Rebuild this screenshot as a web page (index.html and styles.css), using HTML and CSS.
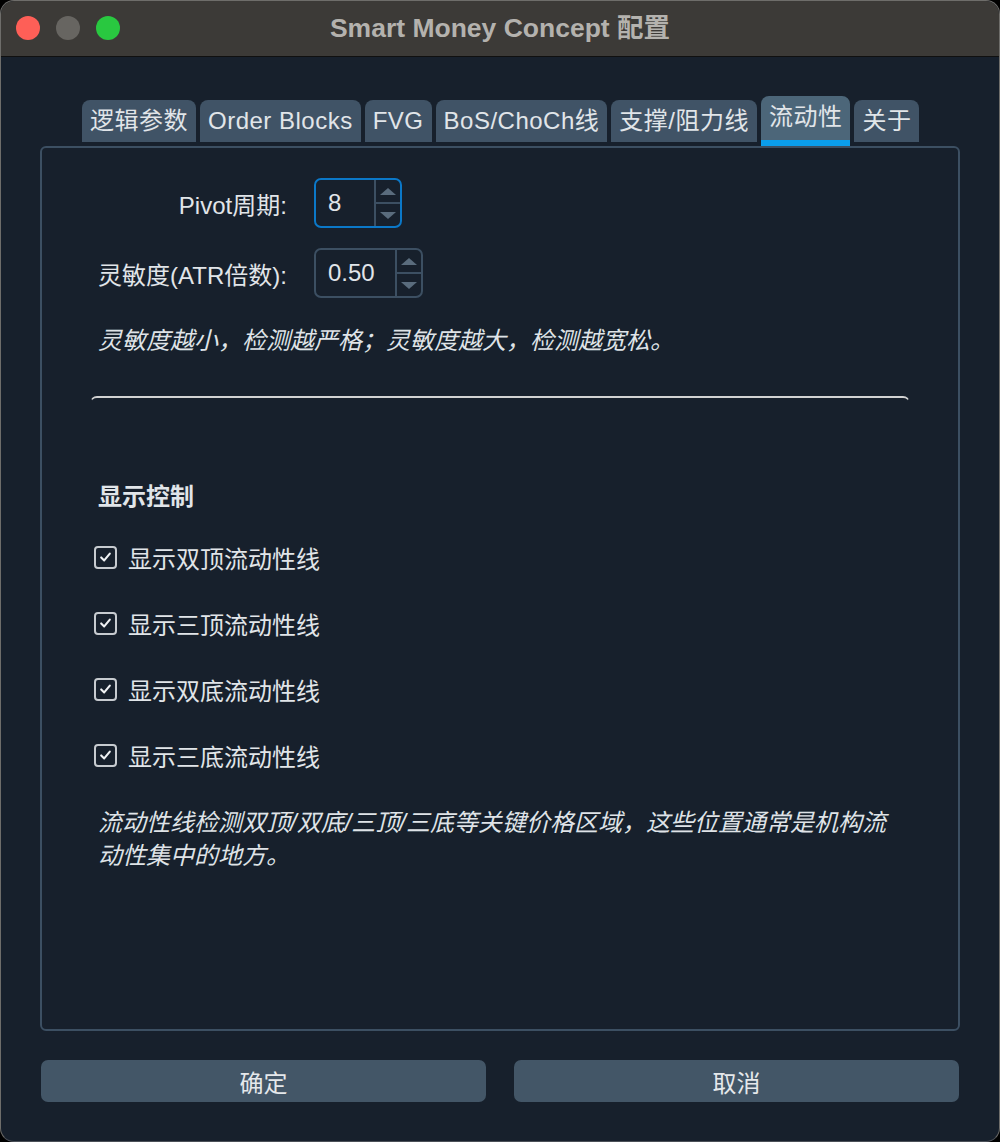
FILE: index.html
```html
<!DOCTYPE html>
<html lang="zh-CN">
<head>
    <meta charset="UTF-8">
    <meta name="viewport" content="width=device-width, initial-scale=1.0">
    <title>Smart Money Concept 配置</title>
    <link rel="stylesheet" href="styles.css">
</head>
<body>
    <div class="window">
        <div class="titlebar">
            <div class="lights">
                <span class="light red"></span>
                <span class="light gray"></span>
                <span class="light green"></span>
            </div>
            <div class="title">Smart Money Concept 配置</div>
        </div>

        <div class="content">
            <div class="tabs">
                <div class="tab">逻辑参数</div>
                <div class="tab">Order Blocks</div>
                <div class="tab">FVG</div>
                <div class="tab">BoS/ChoCh线</div>
                <div class="tab">支撑/阻力线</div>
                <div class="tab active">流动性</div>
                <div class="tab">关于</div>
            </div>

            <div class="panel">
                <div class="form">
                    <label class="formLabel">Pivot周期:</label>
                    <div class="spin focus narrow">
                        <span class="spinValue">8</span>
                        <span class="spinBtns">
                            <span class="spinBtn"><i class="arrowUp"></i></span>
                            <span class="spinBtn"><i class="arrowDown"></i></span>
                        </span>
                    </div>
                    <label class="formLabel">灵敏度(ATR倍数):</label>
                    <div class="spin wide">
                        <span class="spinValue">0.50</span>
                        <span class="spinBtns">
                            <span class="spinBtn"><i class="arrowUp"></i></span>
                            <span class="spinBtn"><i class="arrowDown"></i></span>
                        </span>
                    </div>
                </div>

                <p class="note first">灵敏度越小，检测越严格；灵敏度越大，检测越宽松。</p>

                <div class="separator"></div>

                <div class="groupTitle">显示控制</div>

                <div class="checkRow">
                    <span class="checkBox"><svg viewBox="0 0 22 22" width="22" height="22"><polyline points="6,11.5 9.5,15 16,7" /></svg></span>
                    <span>显示双顶流动性线</span>
                </div>
                <div class="checkRow">
                    <span class="checkBox"><svg viewBox="0 0 22 22" width="22" height="22"><polyline points="6,11.5 9.5,15 16,7" /></svg></span>
                    <span>显示三顶流动性线</span>
                </div>
                <div class="checkRow">
                    <span class="checkBox"><svg viewBox="0 0 22 22" width="22" height="22"><polyline points="6,11.5 9.5,15 16,7" /></svg></span>
                    <span>显示双底流动性线</span>
                </div>
                <div class="checkRow">
                    <span class="checkBox"><svg viewBox="0 0 22 22" width="22" height="22"><polyline points="6,11.5 9.5,15 16,7" /></svg></span>
                    <span>显示三底流动性线</span>
                </div>

                <p class="note last">流动性线检测双顶/双底/三顶/三底等关键价格区域，这些位置通常是机构流动性集中的地方。</p>
            </div>

            <div class="buttons">
                <button class="btn">确定</button>
                <button class="btn">取消</button>
            </div>
        </div>
    </div>
</body>
</html>
```

FILE: styles.css
```css
* {
    box-sizing: border-box;
}

body {
    margin: 0;
    background: #000;
    font-family: "Liberation Sans", "Noto Sans CJK SC", sans-serif;
    color: #e1e5e9;
}

.window {
    width: 1000px;
    height: 1142px;
    border: 1px solid #6e6d6a;
    border-bottom-color: #4b5058;
    border-radius: 14px;
    background: #17202c;
    overflow: hidden;
    display: flex;
    flex-direction: column;
}

.titlebar {
    height: 56px;
    flex: none;
    background: #3c3a37;
    border-bottom: 1px solid #101010;
    position: relative;
    display: flex;
    align-items: center;
    justify-content: center;
}

.lights {
    position: absolute;
    left: 15px;
    top: 15px;
    display: flex;
    gap: 16px;
}

.light {
    width: 24px;
    height: 24px;
    border-radius: 50%;
}

.red {
    background: #fe5f57;
}

.gray {
    background: #676561;
}

.green {
    background: #29c840;
}

.title {
    font-size: 26.5px;
    font-weight: bold;
    color: #b4b2ae;
    margin-top: -6px;
}

.content {
    flex: 1;
    padding: 39px 39px 0 39px;
    display: flex;
    flex-direction: column;
}

.tabs {
    display: flex;
    align-items: flex-end;
    gap: 4px;
    margin-left: 42px;
    height: 50px;
    position: relative;
    z-index: 1;
}

.tab {
    height: 42px;
    margin-bottom: 4px;
    padding: 0 8px;
    background: #405366;
    border-radius: 8px 8px 0 0;
    font-size: 24px;
    line-height: 42px;
    letter-spacing: 0.5px;
    color: #e1e5e9;
    white-space: nowrap;
}

.tab.active {
    height: 50px;
    margin-bottom: 0;
    background: #4c6679;
    border-bottom: 6px solid #0a9deb;
    line-height: 42px;
}

.panel {
    height: 885px;
    flex: none;
    border: 2px solid #3c4f62;
    border-radius: 6px;
    padding: 30px 48px 0 56px;
}

.form {
    display: grid;
    grid-template-columns: auto auto;
    grid-auto-rows: 50px;
    row-gap: 20px;
    column-gap: 27px;
    justify-content: start;
    align-items: center;
}

.formLabel {
    font-size: 24px;
    text-align: right;
}

.spin {
    height: 50px;
    border: 2px solid #3c4f62;
    border-radius: 7px;
    display: flex;
    font-size: 24px;
}

.spin.focus {
    border-color: #0b78c8;
}

.spin.narrow {
    width: 88px;
}

.spin.wide {
    width: 109px;
}

.spinValue {
    flex: 1;
    padding-left: 12px;
    line-height: 46px;
}

.spinBtns {
    width: 26px;
    border-left: 2px solid #3c4f62;
    display: flex;
    flex-direction: column;
}

.spinBtn {
    flex: 1;
    display: flex;
    align-items: center;
    justify-content: center;
}

.spinBtn + .spinBtn {
    border-top: 2px solid #3c4f62;
}

.arrowUp,
.arrowDown {
    width: 0;
    height: 0;
    border-left: 8px solid transparent;
    border-right: 8px solid transparent;
}

.arrowUp {
    border-bottom: 7px solid #5a6c7d;
}

.arrowDown {
    border-top: 7px solid #5a6c7d;
}

.note {
    margin: 0;
    font-size: 24px;
    line-height: 33px;
    font-style: italic;
    color: #dfe3e7;
}

.note.first {
    margin-top: 26px;
}

.note.last {
    margin-top: 18px;
    width: 806px;
}

.separator {
    margin: 39px 0 0 -8px;
    width: 820px;
    height: 10px;
    border-top: 2px solid #d2d2d2;
    border-left: 1px solid transparent;
    border-right: 1px solid transparent;
    border-radius: 7px 7px 0 0;
}

.groupTitle {
    margin-top: 74px;
    font-size: 24px;
    font-weight: bold;
    line-height: 33px;
}

.checkRow {
    height: 66px;
    display: flex;
    align-items: center;
    gap: 11px;
    margin-left: -4px;
    font-size: 24px;
}

.groupTitle + .checkRow {
    margin-top: 11px;
}

.checkBox {
    width: 23px;
    height: 23px;
    border: 2px solid #c7cbd0;
    border-radius: 4px;
    display: flex;
    align-items: center;
    justify-content: center;
}

.checkBox svg {
    fill: none;
    stroke: #f0f2f4;
    stroke-width: 2.4;
    stroke-linecap: round;
    stroke-linejoin: round;
}

.buttons {
    display: flex;
    gap: 28px;
    margin-top: 29px;
    padding: 0 1px;
}

.btn {
    flex: 1;
    height: 42px;
    border: none;
    border-radius: 7px;
    background: #435667;
    color: #e5e8eb;
    font-family: "Liberation Sans", "Noto Sans CJK SC", sans-serif;
    font-size: 24px;
}
```
